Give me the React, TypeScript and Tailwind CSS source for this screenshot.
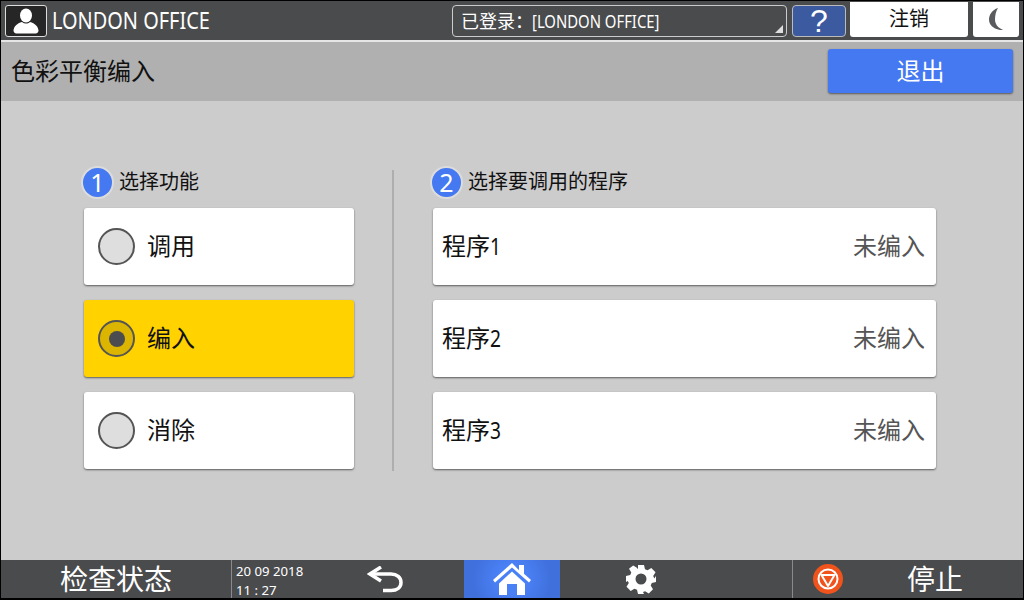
import React from 'react';

const font = "font-['Noto_Sans','Noto_Sans_CJK_SC',sans-serif]";

const functions = [
  { label: '调用', selected: false },
  { label: '编入', selected: true },
  { label: '消除', selected: false },
];

const programs = [
  { name: '程序', n: 1 },
  { name: '程序', n: 2 },
  { name: '程序', n: 3 },
];

const StepLabel: React.FC<{ n: number; text: string }> = ({ n, text }) => (
  <div className="h-[28px] flex items-center gap-[5px] text-[20px] leading-none text-[#111]">
    <span className="w-[33px] h-[33px] rounded-full bg-[#4479f2] border-2 border-[#dcdcdc] flex items-center justify-center text-white text-[25px]">
      {n}
    </span>
    <span>{text}</span>
  </div>
);

const Radio: React.FC<{ selected: boolean }> = ({ selected }) => (
  <span
    className={`w-[37px] h-[37px] rounded-full border-2 border-[#555] flex items-center justify-center ${
      selected ? 'bg-[#dcb500]' : 'bg-[#dedede]'
    }`}
  >
    {selected && <span className="w-[16px] h-[16px] rounded-full bg-[#4b4c50]" />}
  </span>
);

const GearIcon = () => (
  <svg width="30" height="30" viewBox="0 0 30 30" fill="white">
    <path
      fillRule="evenodd"
      d="M12 1h6l1 4.200 2.600 1.100 3.700-2.300 4.200 4.200-2.300 3.700 1.100 2.600L30 12v0 6l-4.200 1-1.100 2.600 2.300 3.700-4.200 4.200-3.700-2.300-2.100.9L18 30h-6l-1-4.200-2.600-1.100-3.700 2.300-2.200-2.200-2-2 2.300-3.700L1.700 17 0 18v-6l4.200-1 1.100-2.600L3 4.700 5.200 3l2 -1.500 3.700 2.300L12 5.200zM15 9.500a5.500 5.500 0 1 0 0 11 5.500 5.500 0 0 0 0-11z"
    />
  </svg>
);

const App: React.FC = () => {
  return (
    <div className={`${font} w-[1024px] h-[600px] flex flex-col overflow-hidden border border-black border-b-2 bg-[#cccccc]`}>
      <header className="h-[39px] shrink-0 bg-[#4a4b4d] flex items-center text-white">
        <div className="ml-[4px] w-[42px] h-[32px] rounded-[3px] border border-[#ddd] bg-[#262626] flex items-center justify-center">
          <svg width="28" height="26" viewBox="0 0 28 26" fill="white">
            <ellipse cx="14" cy="7.5" rx="6" ry="7" />
            <path d="M10 14c-5 1.500-8 4-8.500 8.500 0 1.500 1 3 3 3h19c2 0 3-1.500 3-3-.5-4.500-3.500-7-8.500-8.500-2.500 2-5.500 2-8 0z" />
          </svg>
        </div>
        <span className="ml-[5px] w-[400px] text-[23px] leading-none scale-x-[0.866] origin-left whitespace-nowrap">LONDON OFFICE</span>
        <div className="relative w-[335px] h-[32px] rounded-[4px] border border-[#ccc] flex items-center pl-[8px] text-[18px] leading-none whitespace-nowrap">
          <span>已登录：</span>
          <span className="-ml-[1px] inline-block origin-left scale-x-[0.825]">[LONDON OFFICE]</span>
          <span className="absolute right-[3px] bottom-[3px] w-0 h-0 border-l-[8px] border-l-transparent border-b-[8px] border-b-[#ddd]" />
        </div>
        <div className="ml-[5px] w-[54px] h-[32px] rounded-[4px] border border-[#bbb] bg-[#3c5a9f] flex items-center justify-center font-['Liberation_Sans',sans-serif] text-[32px] leading-none">?</div>
        <div className="ml-[4px] w-[118px] h-[35px] -mt-[3px] rounded-b-[3px] bg-white flex items-center justify-center text-[#111] text-[20px] leading-none">注销</div>
        <div className="ml-[5px] w-[46px] h-[35px] -mt-[3px] rounded-b-[3px] bg-white flex items-center justify-center">
          <svg width="16" height="24" viewBox="0 0 16 24" fill="#5a5b5e">
            <path d="M10 1C4 3 1 7.500 1 12.500S4.500 21.500 12 23c1.500.2 2.800 0 3-.2C10 21 7 17 7 12.500S8 4 10 1z" />
          </svg>
        </div>
      </header>

      <div className="h-[2px] shrink-0 bg-[#e6e6e6]" />

      <div className="h-[59px] shrink-0 bg-[#b0b0b0] flex items-center justify-between pl-[10px] pr-[10px] text-[#111]">
        <span className="text-[24px] leading-none pb-[1px]">色彩平衡编入</span>
        <button className="w-[185px] h-[44px] -mt-[2px] rounded-[3px] bg-[#4479f2] shadow-[0_1px_2px_rgba(0,0,0,0.5)] text-white text-[24px] leading-none">退出</button>
      </div>

      <main className="flex-1 flex pt-[67px] pl-[83px]">
        <section className="w-[270px] flex flex-col">
          <div className="-ml-[3px]"><StepLabel n={1} text="选择功能" /></div>
          <div className="mt-[12px] flex flex-col gap-[15px]">
            {functions.map(f => (
              <div
                key={f.label}
                className={`h-[77px] rounded-[3px] shadow-[0_1px_2px_rgba(0,0,0,0.55)] flex items-center gap-[12px] pl-[14px] text-[24px] leading-none text-[#111] ${
                  f.selected ? 'bg-[#ffd200]' : 'bg-white'
                }`}
              >
                <Radio selected={f.selected} />
                <span className="pb-[2px]">{f.label}</span>
              </div>
            ))}
          </div>
        </section>

        <div className="ml-[38px] mt-[2px] w-[2px] h-[301px] bg-[#aeaeae]" />

        <section className="ml-[39px] w-[503px] flex flex-col">
          <div className="-ml-[3px]"><StepLabel n={2} text="选择要调用的程序" /></div>
          <div className="mt-[12px] flex flex-col gap-[15px]">
            {programs.map(p => (
              <div
                key={p.n}
                className="h-[77px] rounded-[3px] bg-white shadow-[0_1px_2px_rgba(0,0,0,0.55)] flex items-center justify-between pl-[9px] pr-[11px] pb-[2px] text-[24px] leading-none"
              >
                <span className="text-[#111] whitespace-nowrap">
                  {p.name}
                  <span className="inline-block origin-left scale-x-[0.8] -mr-[3px]">{p.n}</span>
                </span>
                <span className="text-[#555]">未编入</span>
              </div>
            ))}
          </div>
        </section>
      </main>

      <footer className="h-[38px] shrink-0 bg-[#4a4b4d] flex items-stretch text-white">
        <div className="w-[231px] border-r border-[#8a8a8a] flex items-center justify-center text-[28px] leading-none">检查状态</div>
        <div className="w-[120px] pl-[4px] pt-[2px] flex flex-col text-[13.2px] leading-[19px]">
          <span>20 09 2018</span>
          <span>11 : 27</span>
        </div>
        <div className="w-[112px] flex items-center pl-[15px]">
          <svg width="36" height="27" viewBox="0 0 36 27" fill="none" stroke="white" strokeWidth="3.5">
            <path d="M3 8h21c6 0 10 3.500 10 8.500s-4 8-10 8H16" />
            <path d="M14 1 3 8l11 7" />
          </svg>
        </div>
        <div className="w-[96px] bg-[#4070dc] bg-[radial-gradient(circle,#4a80f5_30%,#4070dc_75%)] flex items-center justify-center">
          <svg width="38" height="32" viewBox="0 0 38 32" fill="white">
            <path d="M19 0 0 17l2 2.500L19 4.500l17 15 2-2.500-7-6.200V2h-5v5.300z" />
            <path d="M6 20.500 19 8.500l13 12V32H24V21H14v11H6z" />
          </svg>
        </div>
        <div className="w-[232px] flex items-center pl-[66px]">
          <GearIcon />
        </div>
        <div className="border-l border-[#8a8a8a] flex-1 flex items-center pl-[20px]">
          <span className="w-[30px] h-[30px] rounded-full bg-[#f0531c] flex items-center justify-center">
            <svg width="22" height="22" viewBox="0 0 22 22" fill="none" stroke="white" strokeWidth="2">
              <circle cx="11" cy="11" r="9.500" />
              <path d="M4.500 7h13L11 18z" strokeLinejoin="round" />
            </svg>
          </span>
          <span className="ml-[64px] text-[28px] leading-none">停止</span>
        </div>
      </footer>
    </div>
  );
};

export default App;
